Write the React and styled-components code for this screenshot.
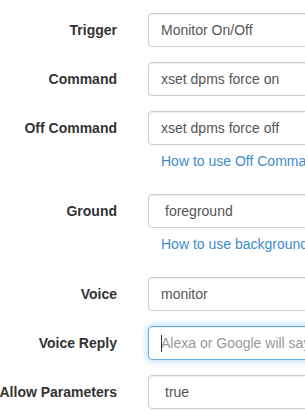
import React from "react";
import styled, { createGlobalStyle, css } from "styled-components";

const GlobalStyle = createGlobalStyle`
  html, body {
    margin: 0;
    padding: 0;
    background: #fff;
    overflow: hidden;
  }
  body {
    font-family: "Liberation Sans", Arial, Helvetica, sans-serif;
    font-size: 14px;
    line-height: 20px;
    color: #333;
  }
  * { box-sizing: border-box; }
`;

const Form = styled.form`
  display: flex;
  flex-direction: column;
  padding-top: 13px;
  width: 560px;
`;

const FormGroup = styled.div`
  display: grid;
  grid-template-columns: 117px 400px;
  column-gap: 31px;
  margin-bottom: 15px;
`;

const Label = styled.label`
  display: flex;
  justify-content: flex-end;
  white-space: nowrap;
  font-weight: bold;
  line-height: 20px;
  padding-top: 7px;
  color: #333;
`;

const Control = styled.div`
  display: flex;
  flex-direction: column;
  position: relative;
`;

const fieldBase = css`
  display: block;
  width: 100%;
  height: 34px;
  margin: 0;
  padding: 6px 12px;
  font-family: inherit;
  font-size: 14px;
  line-height: 20px;
  color: #555;
  background: #fff;
  border: 1px solid #ccc;
  border-radius: 4px;
  box-shadow: inset 0 1px 1px rgba(0, 0, 0, 0.075);
  outline: none;
  &::placeholder {
    color: #999;
    opacity: 1;
  }
  ${(p) =>
    p.$focused &&
    css`
      border-color: #66afe9;
      box-shadow: inset 0 1px 1px rgba(0, 0, 0, 0.075),
        0 0 8px rgba(102, 175, 233, 0.6);
    `}
`;

const Input = styled.input`
  ${fieldBase}
`;

const Select = styled.select`
  ${fieldBase}
  appearance: none;
  -webkit-appearance: none;
  padding-left: 16px;
`;

const Caret = styled.span`
  position: absolute;
  left: 13px;
  top: 9px;
  width: 1px;
  height: 17px;
  background: #333;
`;

const HelpLink = styled.a`
  display: block;
  margin-top: 6px;
  margin-bottom: 8px;
  padding-left: 13px;
  line-height: 20px;
  color: #428bca;
  text-decoration: none;
  white-space: nowrap;
`;

const fields = [
  { label: "Trigger", value: "Monitor On/Off" },
  { label: "Command", value: "xset dpms force on" },
  { label: "Off Command", value: "xset dpms force off", help: "How to use Off Command" },
  { label: "Ground", select: ["foreground", "background"], help: "How to use background" },
  { label: "Voice", value: "monitor" },
  { label: "Voice Reply", placeholder: "Alexa or Google will say", focused: true },
  { label: "Allow Parameters", select: ["true", "false"] },
];

export default function App() {
  return (
    <>
      <GlobalStyle />
      <Form onSubmit={(e) => e.preventDefault()}>
        {fields.map((f) => (
          <FormGroup key={f.label}>
            <Label>{f.label}</Label>
            <Control>
              {f.select ? (
                <Select defaultValue={f.select[0]}>
                  {f.select.map((o) => (
                    <option key={o} value={o}>
                      {o}
                    </option>
                  ))}
                </Select>
              ) : (
                <Input
                  type="text"
                  defaultValue={f.value}
                  placeholder={f.placeholder}
                  $focused={f.focused}
                />
              )}
              {f.focused && <Caret />}
              {f.help && <HelpLink href="#">{f.help}</HelpLink>}
            </Control>
          </FormGroup>
        ))}
      </Form>
    </>
  );
}
